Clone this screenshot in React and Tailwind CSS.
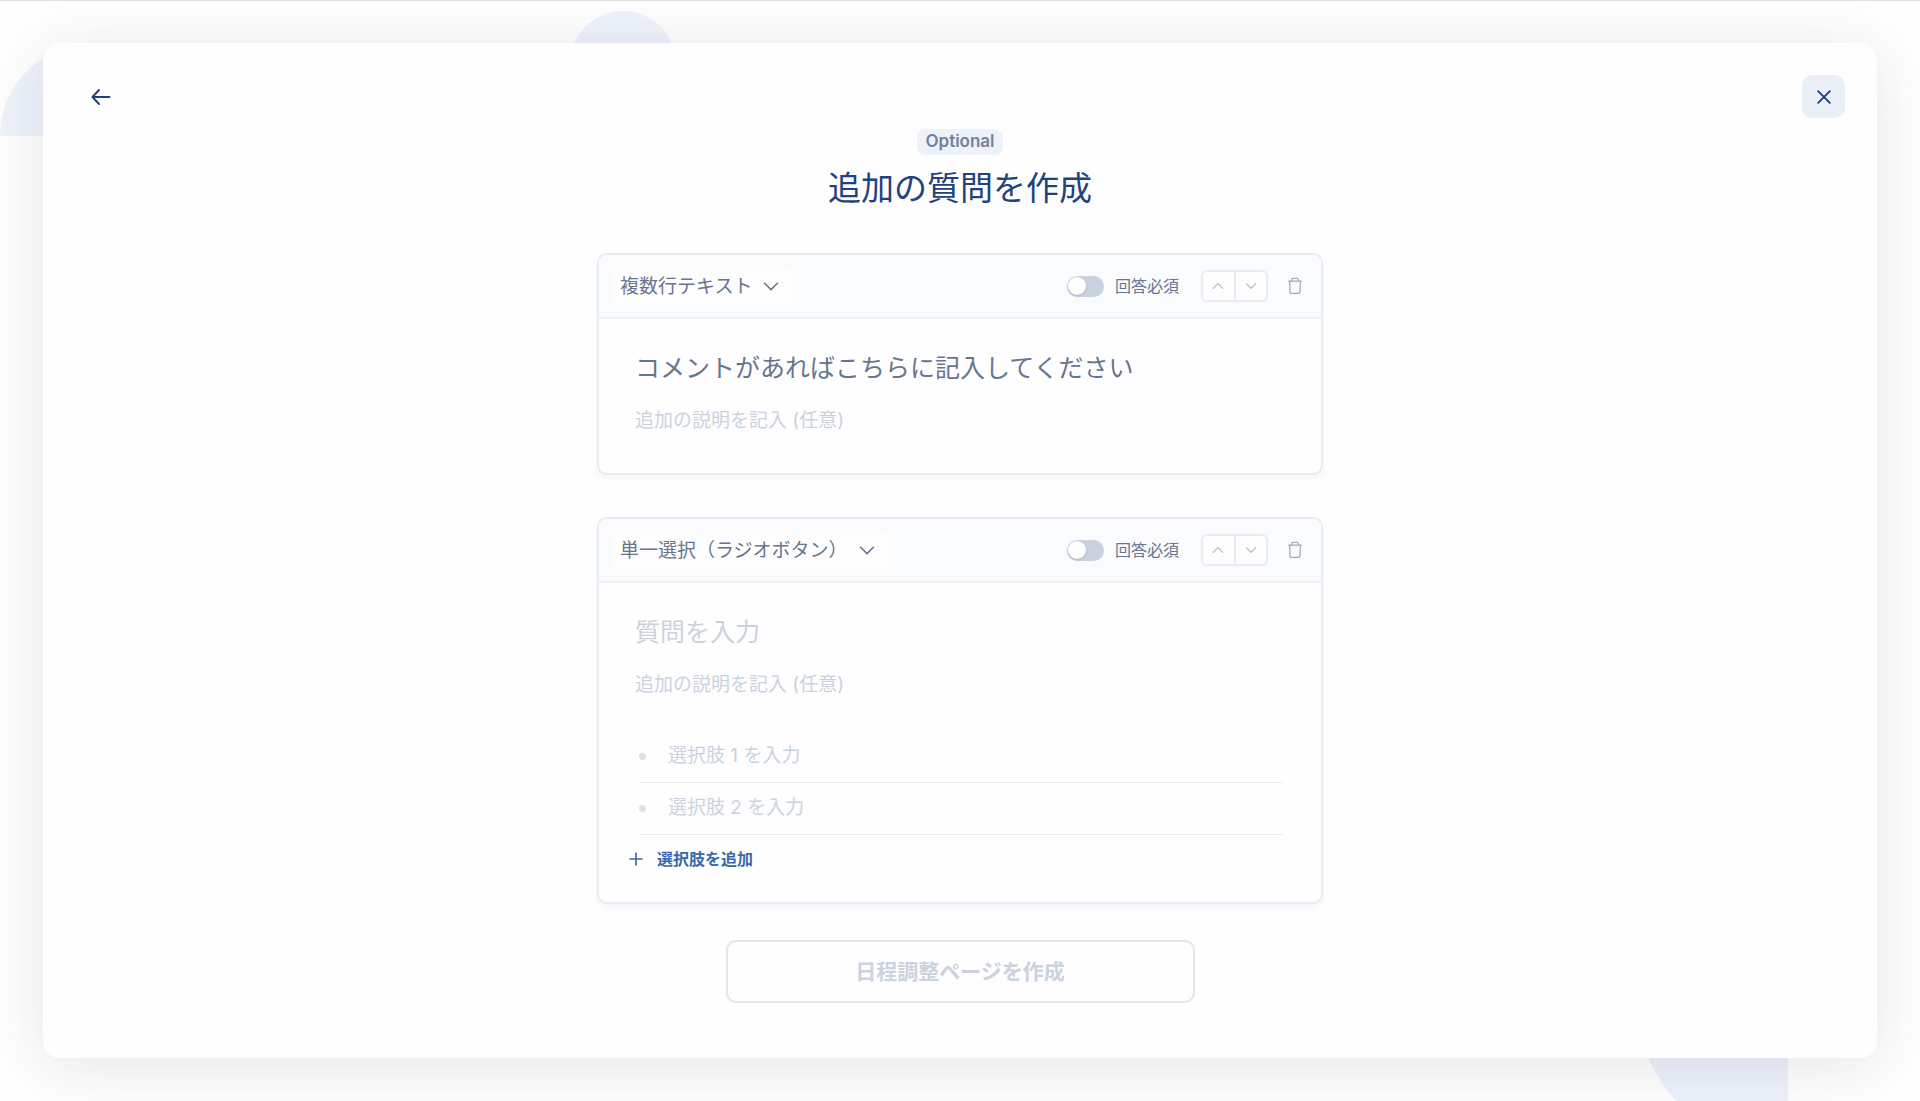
import { useState } from 'react';

const QUESTION_TYPES = ['単一行テキスト', '複数行テキスト', '単一選択（ラジオボタン）', '複数選択（チェックボックス）'];

const initialQuestions = [
  {
    id: 'q1',
    type: '複数行テキスト',
    title: 'コメントがあればこちらに記入してください',
    description: '',
    required: false,
    choices: null,
  },
  {
    id: 'q2',
    type: '単一選択（ラジオボタン）',
    title: '',
    description: '',
    required: false,
    choices: ['', ''],
  },
];

const Icon = ({ className, children }) => (
  <svg
    viewBox="0 0 24 24"
    fill="none"
    stroke="currentColor"
    strokeLinecap="round"
    strokeLinejoin="round"
    className={className}
    aria-hidden="true"
  >
    {children}
  </svg>
);

const Background = () => (
  <div className="absolute inset-0 overflow-hidden" aria-hidden="true">
    <div className="absolute left-0 top-[43px] h-[92px] w-[184px] rounded-t-full bg-[#eef3fa]" />
    <div className="absolute left-[570px] top-[10px] size-[106px] rounded-full bg-[#edf2fa]" />
    <div className="absolute right-[132px] -bottom-[49px] h-[152px] w-[152px] rounded-bl-full bg-[#ecf1fa]" />
  </div>
);

const QuestionHeader = ({ question, onChange, onMove, onRemove }) => (
  <div className="flex h-16 items-center justify-between rounded-t-lg border-b-2 border-[#eef1f6] bg-[#fafbfd] pl-[11px] pr-4">
    <div className="relative flex items-center text-[#67758f]">
      <select
        aria-label="質問の種類"
        value={question.type}
        onChange={(e) => onChange({ type: e.target.value })}
        className="field-sizing-content h-10 appearance-none rounded-lg bg-[#fdfdfe] pl-[10px] pr-10 pt-[2px] text-[19px] outline-none"
      >
        {QUESTION_TYPES.map((type) => (
          <option key={type}>{type}</option>
        ))}
      </select>
      <Icon className="pointer-events-none absolute right-[10px] size-[22px]">
        <path d="M5 9l7 7 7-7" strokeWidth="1.7" />
      </Icon>
    </div>

    <div className="flex items-center">
      <label className="flex items-center gap-[11px] text-base text-[#67758f]">
        <input
          type="checkbox"
          checked={question.required}
          onChange={(e) => onChange({ required: e.target.checked })}
          className="flex h-[21px] w-[37px] appearance-none items-center rounded-full bg-[#c9d1df] px-px before:size-[18px] before:rounded-full before:bg-white before:shadow-sm checked:justify-end checked:bg-[#2c5ea8]"
        />
        回答必須
      </label>

      <div className="ml-[22px] flex h-8 w-[67px] divide-x-2 divide-[#e8ebf2] rounded-md border-2 border-[#e8ebf2] bg-[#fdfdfe] text-[#b3bac6]">
        <button type="button" aria-label="上へ移動" onClick={() => onMove(-1)} className="flex flex-1 items-center justify-center">
          <Icon className="size-4">
            <path d="M5 15.500 12 8.500l7 7" strokeWidth="1.8" />
          </Icon>
        </button>
        <button type="button" aria-label="下へ移動" onClick={() => onMove(1)} className="flex flex-1 items-center justify-center">
          <Icon className="size-4">
            <path d="M5 8.500l7 7 7-7" strokeWidth="1.8" />
          </Icon>
        </button>
      </div>

      <button type="button" aria-label="質問を削除" onClick={onRemove} className="ml-[17px] flex size-5 items-center justify-center text-[#a3aab7]">
        <Icon className="size-5">
          <path
            d="M4.500 6.200h15M7.500 6.200l.8-2.400A1.400 1.400 0 0 1 9.600 2.800h4.800a1.400 1.400 0 0 1 1.300 1l.8 2.400M5.500 6.200l.5 13a1.700 1.700 0 0 0 1.700 1.600h8.600a1.700 1.700 0 0 0 1.700-1.600l.5-13"
            strokeWidth="1.5"
          />
        </Icon>
      </button>
    </div>
  </div>
);

const QuestionCard = ({ question, onChange, onMove, onRemove }) => {
  const handleChoiceChange = (index, value) => {
    onChange({ choices: question.choices.map((choice, i) => (i === index ? value : choice)) });
  };

  return (
    <li className="rounded-[10px] border-2 border-[#e9ecf2] bg-[#fefefe] shadow-[0_3px_6px_rgba(100,130,180,0.08)]">
      <QuestionHeader question={question} onChange={onChange} onMove={onMove} onRemove={onRemove} />

      <div className="px-9 pt-8">
        <input
          type="text"
          aria-label="質問"
          placeholder="質問を入力"
          value={question.title}
          onChange={(e) => onChange({ title: e.target.value })}
          className="block h-9 w-full text-[25px] text-[#67758f] outline-none placeholder:text-[#cbd2df]"
        />
        <input
          type="text"
          aria-label="説明"
          placeholder="追加の説明を記入 (任意)"
          value={question.description}
          onChange={(e) => onChange({ description: e.target.value })}
          className="mt-[18px] block h-[30px] w-full text-[19px] text-[#67758f] outline-none placeholder:text-[#cbd2df]"
        />
      </div>

      {question.choices ? (
        <div className="pb-[31px] pt-8">
          <ul className="pl-10 pr-[38px]">
            {question.choices.map((choice, index) => (
              <li key={index} className="flex h-[52px] items-center gap-[22px] border-b border-[#e9ecf1]">
                <span className="size-[7px] rounded-full bg-[#dde1ea]" />
                <input
                  type="text"
                  aria-label={`選択肢 ${index + 1}`}
                  placeholder={`選択肢 ${index + 1} を入力`}
                  value={choice}
                  onChange={(e) => handleChoiceChange(index, e.target.value)}
                  className="min-w-0 flex-1 text-[19px] text-[#67758f] outline-none placeholder:text-[#cbd2df]"
                />
              </li>
            ))}
          </ul>
          <button
            type="button"
            onClick={() => onChange({ choices: [...question.choices, ''] })}
            className="ml-7 mt-3 flex h-6 items-center gap-3 text-base font-bold text-[#3a68ab]"
          >
            <Icon className="size-[18px]">
              <path d="M12 4v16M4 12h16" strokeWidth="2.200" />
            </Icon>
            選択肢を追加
          </button>
        </div>
      ) : (
        <div className="h-[38px]" />
      )}
    </li>
  );
};

const App = () => {
  const [questions, setQuestions] = useState(initialQuestions);

  const handleChange = (id, patch) => {
    setQuestions(questions.map((q) => (q.id === id ? { ...q, ...patch } : q)));
  };

  const handleMove = (index, step) => {
    const target = index + step;
    if (target < 0 || target >= questions.length) return;
    const next = [...questions];
    [next[index], next[target]] = [next[target], next[index]];
    setQuestions(next);
  };

  return (
    <div className="relative flex min-h-screen flex-col border-t border-[#e0e1e3] bg-[#fefefe] px-[43px] pb-[43px] pt-[42px] font-['Inter','Noto_Sans_CJK_JP',sans-serif]">
      <Background />

      <main className="relative flex flex-1 flex-col rounded-2xl bg-[#fefefe] pb-[52px] shadow-[0_8px_60px_rgba(40,55,80,0.12)]">
        <div className="flex items-center justify-between pl-9 pr-8 pt-8 text-[#233f7c]">
          <button type="button" aria-label="戻る" className="flex size-[43px] items-center justify-center">
            <Icon className="size-6">
              <path d="M20.500 12h-17M10 5 3.500 12l6.500 7" strokeWidth="1.9" />
            </Icon>
          </button>
          <button type="button" aria-label="閉じる" className="flex size-[43px] items-center justify-center rounded-[10px] bg-[#eaeff8]">
            <Icon className="size-5">
              <path d="M5 5l14 14M19 5 5 19" strokeWidth="2.300" />
            </Icon>
          </button>
        </div>

        <div className="mt-[11px] flex flex-col items-center">
          <span className="flex h-[26px] items-center rounded-lg bg-[#edf1f8] px-2 text-[17px] font-semibold text-[#74819a]">
            Optional
          </span>
          <h1 className="mt-2 text-[33px] leading-[50px] text-[#22427f]">追加の質問を作成</h1>
        </div>

        <form className="mx-auto mt-10 w-full max-w-[726px]" onSubmit={(e) => e.preventDefault()}>
          <ul className="flex flex-col gap-[42px]">
            {questions.map((question, index) => (
              <QuestionCard
                key={question.id}
                question={question}
                onChange={(patch) => handleChange(question.id, patch)}
                onMove={(step) => handleMove(index, step)}
                onRemove={() => setQuestions(questions.filter((q) => q.id !== question.id))}
              />
            ))}
          </ul>
          <button
            type="submit"
            className="mx-auto mt-9 block h-[63px] w-full max-w-[469px] rounded-[10px] border-2 border-[#dfe6ef] text-[21px] font-bold text-[#cbd2e0]"
          >
            日程調整ページを作成
          </button>
        </form>
      </main>
    </div>
  );
};

export default App;
